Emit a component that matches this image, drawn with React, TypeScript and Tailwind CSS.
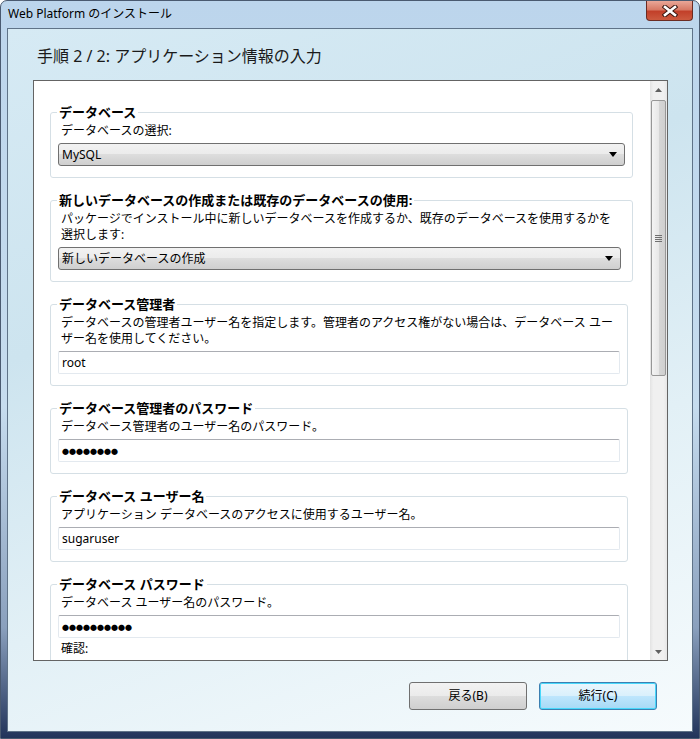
import type { ReactNode } from "react";

const FONT = "font-['Noto_Sans','Noto_Sans_CJK_JP',sans-serif]";

const Group = ({ title, width, children }: { title: string; width: string; children: ReactNode }) => (
  <fieldset className={`border border-[#d5dfe5] rounded-[3px] px-[7px] pb-[11px] ${width}`}>
    <legend className="-ml-[1px] px-[2px] text-[13px] leading-[16px] font-bold text-black">{title}</legend>
    {children}
  </fieldset>
);

const Desc = ({ children }: { children: ReactNode }) => (
  <div className="ml-[3px] mt-[3px] text-[12px] leading-[16px] text-black whitespace-nowrap">{children}</div>
);

const Combo = ({ value, width }: { value: string; width: string }) => (
  <div
    className={`mt-[4px] h-[23px] ${width} flex items-center justify-between rounded-[3px] border border-[#707070] bg-[linear-gradient(180deg,#f2f2f2_0%,#ebebeb_50%,#dddddd_50%,#cfcfcf_100%)] pl-[3px] pr-[7px]`}
  >
    <span className="text-[12px] leading-[16px] text-black">{value}</span>
    <svg width="8" height="5" viewBox="0 0 8 5">
      <path d="M0 0 H8 L4 5 Z" fill="#000" />
    </svg>
  </div>
);

const TextBox = ({ children }: { children: ReactNode }) => (
  <div className="mt-[4px] h-[23px] w-full flex items-center rounded-[2px] border border-[#e3e9ef] border-t-[#abadb3] bg-white pl-[3px]">
    {children}
  </div>
);

const Dots = ({ n }: { n: number }) => (
  <span className="text-[7px] leading-[8px] text-black font-['Noto_Sans_CJK_JP',sans-serif]">{"●".repeat(n)}</span>
);

const ScrollBar = () => (
  <div className="w-[17px] flex flex-col bg-[linear-gradient(90deg,#e3e3e3_0%,#f0f0f0_20%,#f0f0f0_80%,#e6e6e6_100%)]">
    <div className="h-[17px] flex items-center justify-center">
      <svg width="7" height="4" viewBox="0 0 7 4">
        <path d="M0 4 L3.5 0 L7 4 Z" fill="#606060" />
      </svg>
    </div>
    <div className="flex-1 px-[1px] pt-[2px]">
      <div className="h-[276px] rounded-[2px] border border-[#979797] bg-[linear-gradient(90deg,#f4f4f4_0%,#e8e8e8_50%,#d6d6d6_51%,#cfcfcf_100%)] flex items-center justify-center">
        <div className="flex flex-col gap-[1px]">
          <div className="w-[7px] h-[1px] bg-[#707070]" />
          <div className="w-[7px] h-[1px] bg-[#707070]" />
          <div className="w-[7px] h-[1px] bg-[#707070]" />
          <div className="w-[7px] h-[1px] bg-[#707070]" />
        </div>
      </div>
    </div>
    <div className="h-[17px] flex items-center justify-center">
      <svg width="7" height="4" viewBox="0 0 7 4">
        <path d="M0 0 L7 0 L3.5 4 Z" fill="#606060" />
      </svg>
    </div>
  </div>
);

const Button = ({ label, primary }: { label: string; primary?: boolean }) => (
  <div
    className={`w-[118px] h-[28px] rounded-[3px] border flex items-center justify-center text-[12px] leading-[16px] text-black ${
      primary
        ? "border-[#3c7fb1] shadow-[inset_0_0_0_1px_#48d8fb] bg-[linear-gradient(180deg,#eaf6fd_0%,#d9f0fc_50%,#bee6fd_50%,#a7d9f5_100%)]"
        : "border-[#707070] bg-[linear-gradient(180deg,#f2f2f2_0%,#ebebeb_50%,#dddddd_50%,#cfcfcf_100%)]"
    }`}
  >
    {label}
  </div>
);

export default function App() {
  return (
    <div
      className={`${FONT} w-[700px] h-[739px] flex flex-col rounded-t-[7px] border border-[#4a5a70] bg-[linear-gradient(180deg,#bcd5ec_0%,#c6dcee_55%,#8aa0bd_85%,#22345a_100%)] overflow-hidden`}
    >
      <div className="h-[27px] flex items-start">
        <div className="pl-[7px] pt-[5px] text-[12px] leading-[16px] text-black">Web Platform のインストール</div>
        <div className="ml-auto mr-[6px] w-[47px] h-[20px] rounded-b-[4px] border border-t-0 border-[#6b2b22] bg-[linear-gradient(180deg,#e9a798_0%,#d77a66_45%,#c2402a_55%,#cc5a3f_100%)] flex items-center justify-center">
          <svg width="16" height="12" viewBox="0 0 16 12">
            <path d="M3 2 L13 10 M13 2 L3 10" stroke="#3b1812" strokeWidth="4.6" strokeLinecap="square" />
            <path d="M3 2 L13 10 M13 2 L3 10" stroke="#ffffff" strokeWidth="2.6" strokeLinecap="square" />
          </svg>
        </div>
      </div>
      <div className="ml-[6px] w-[686px] h-[704px] border border-[#5f7388] bg-[linear-gradient(160deg,#d6eaf4_0%,#cde4ef_35%,#e2f0f6_65%,#f6fbfd_100%)] flex flex-col">
        <div className="ml-[29px] mt-[17px] text-[16px] leading-[21px] text-[#1a1a1a]">手順 2 / 2: アプリケーション情報の入力</div>
        <div className="ml-[25px] mt-[13px] w-[635px] h-[581px] border border-[#646464] bg-white flex">
          <div className="flex-1 overflow-hidden pl-[16px] pt-[23px] flex flex-col items-start gap-[14px]">
            <Group title="データベース" width="w-[583px]">
              <Desc>データベースの選択:</Desc>
              <Combo value="MySQL" width="w-[567px]" />
            </Group>
            <Group title="新しいデータベースの作成または既存のデータベースの使用:" width="w-[583px]">
              <Desc>
                パッケージでインストール中に新しいデータベースを作成するか、既存のデータベースを使用するかを
                <br />
                選択します:
              </Desc>
              <Combo value="新しいデータベースの作成" width="w-[563px]" />
            </Group>
            <Group title="データベース管理者" width="w-[578px]">
              <Desc>
                データベースの管理者ユーザー名を指定します。管理者のアクセス権がない場合は、データベース ユー
                <br />
                ザー名を使用してください。
              </Desc>
              <TextBox>
                <span className="text-[12px] leading-[16px] text-black">root</span>
              </TextBox>
            </Group>
            <Group title="データベース管理者のパスワード" width="w-[578px]">
              <Desc>データベース管理者のユーザー名のパスワード。</Desc>
              <TextBox>
                <Dots n={8} />
              </TextBox>
            </Group>
            <Group title="データベース ユーザー名" width="w-[578px]">
              <Desc>アプリケーション データベースのアクセスに使用するユーザー名。</Desc>
              <TextBox>
                <span className="text-[12px] leading-[16px] text-black">sugaruser</span>
              </TextBox>
            </Group>
            <Group title="データベース パスワード" width="w-[578px]">
              <Desc>データベース ユーザー名のパスワード。</Desc>
              <TextBox>
                <Dots n={10} />
              </TextBox>
              <Desc>確認:</Desc>
              <TextBox>
                <Dots n={10} />
              </TextBox>
            </Group>
          </div>
          <ScrollBar />
        </div>
        <div className="mt-[21px] mr-[35px] flex justify-end gap-[12px]">
          <Button label="戻る(B)" />
          <Button label="続行(C)" primary />
        </div>
      </div>
    </div>
  );
}
